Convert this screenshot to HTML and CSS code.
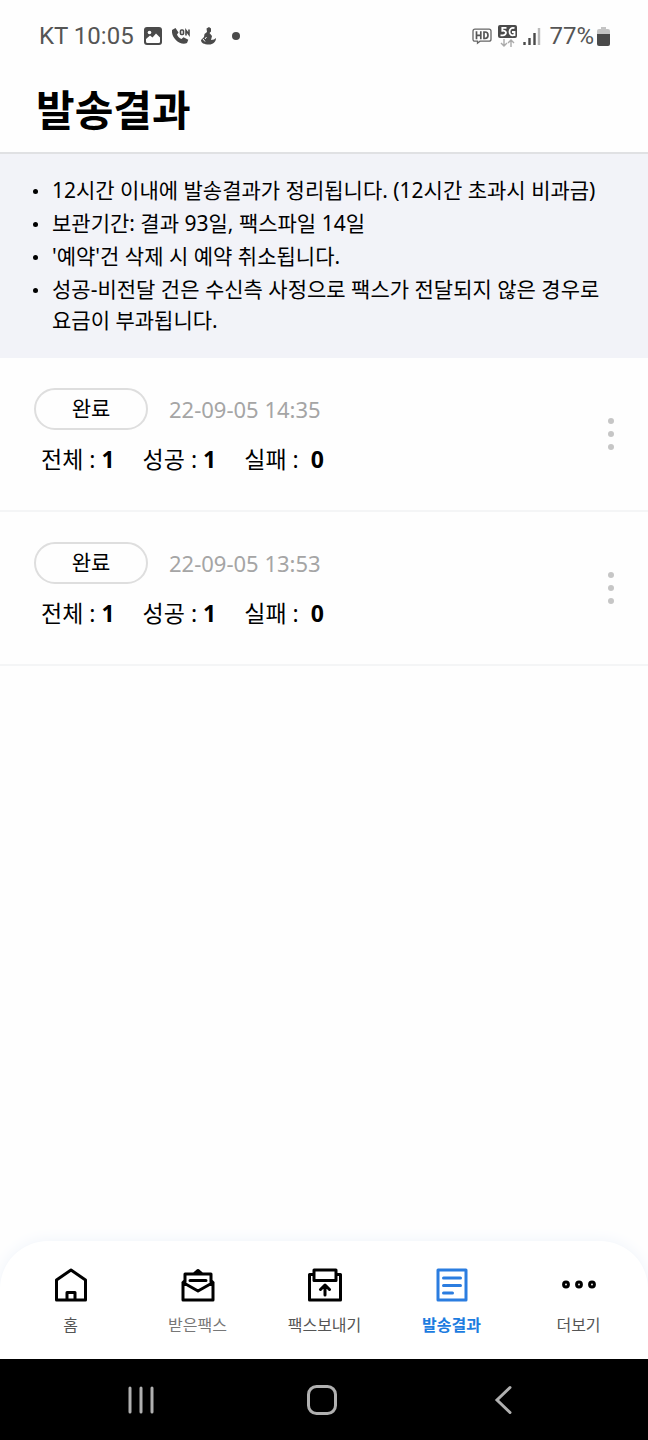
FILE: index.html
```html
<!DOCTYPE html>
<html lang="ko">
<head>
  <meta charset="UTF-8" />
  <meta name="viewport" content="width=device-width, initial-scale=1.0"/>
  <title>발송결과</title>
  <link rel="stylesheet" href="styles.css">
</head>
<body>
  <div class="status-bar">
    <div class="status-left">
      <span class="clock">KT 10:05</span>
      <svg width="18" height="18" viewBox="0 0 18 18">
        <rect width="18" height="18" rx="3" fill="#4a4a4a"/>
        <circle cx="5.5" cy="5.5" r="1.8" fill="#fff"/>
        <path d="M2 14.5V12l4-3.5 2.5 2 3.5-4 4 4v4.500Q16 16 14.500 16H3.500Q2 16 2 14.500z" fill="#fff"/>
      </svg>
      <svg width="18" height="18" viewBox="0 0 18 18">
        <path d="M0 3l3.500-2 3 4.500-1.500 2c.8 2 2.300 3.700 4.500 4.500l2-1.800 4.800 2.500-1.300 3.300C8 19-1 11 0 3z" fill="#4a4a4a"/>
        <rect x="8.500" y="3" width="3" height="4.500" rx="1" fill="none" stroke="#4a4a4a" stroke-width="1.600"/>
        <path d="M14 8.500V3.500l3 4V2.500" fill="none" stroke="#4a4a4a" stroke-width="1.600"/>
      </svg>
      <svg width="16" height="18" viewBox="0 0 16 18">
        <path d="M6.500 1.500L9 0l2 1.500v3L9.500 6l2.500 3-1 4 3-.5 2-1.500c0 4-3 6.500-7 6.500-5 0-8-1.500-8-4.500L4 10l.5-3L7 5z" fill="#4a4a4a"/>
        <path d="M3 12l2 2.500M6.500 10l-1.500 2" stroke="#fff" stroke-width="1" fill="none"/>
      </svg>
      <span class="more-dot"></span>
    </div>
    <div class="status-right">
      <svg width="20" height="18" viewBox="0 0 20 18">
        <path d="M3 2.200h14q2 0 2 2v8q0 2-2 2H8l-2.500 2v-2H3q-2 0-2-2v-8q0-2 2-2z" fill="none" stroke="#666" stroke-width="1.300"/>
        <path d="M4.500 4.300v8M8.800 4.300v8M4.500 8.300h4M12 5v6.500h1c4 0 4-6.500 0-6.500z" fill="none" stroke="#555" stroke-width="1.700"/>
      </svg>
      <svg width="19" height="22" viewBox="0 0 19 22">
        <rect width="19" height="13" rx="2" fill="#4a4a4a"/>
        <path d="M8.500 2.800H4.300v3c5-.8 4.700 4.700.2 4.500H2.500M16.500 3.200c-6.500-2-6.500 8.500-1 7h1V7H14" fill="none" stroke="#fff" stroke-width="1.800"/>
        <path d="M6 14v7M3 18l3 3 3-3M13 22v-7M10 18l3-3 3 3" fill="none" stroke="#aaa" stroke-width="1.400"/>
      </svg>
      <svg width="18" height="18" viewBox="0 0 18 18">
        <path d="M1.500 15v3M6.500 11v7M11.500 6v12" stroke="#4a4a4a" stroke-width="2.400"/>
        <path d="M16 1v17" stroke="#bbb" stroke-width="2.400"/>
      </svg>
      <span class="battery-text">77%</span>
      <svg class="battery" width="13" height="19" viewBox="0 0 13 19">
        <path d="M4 0h5v2h2q2 0 2 2v4H0V4q0-2 2-2h2z" fill="#c4c4c4"/>
        <path d="M0 7h13v10q0 2-2 2H2q-2 0-2-2z" fill="#4a4a4a"/>
      </svg>
    </div>
  </div>

  <header class="header">
    <h1>발송결과</h1>
  </header>

  <ul class="notice">
    <li>12시간 이내에 발송결과가 정리됩니다. (12시간 초과시 비과금)</li>
    <li>보관기간: 결과 93일, 팩스파일 14일</li>
    <li>'예약'건 삭제 시 예약 취소됩니다.</li>
    <li>성공-비전달 건은 수신측 사정으로 팩스가 전달되지 않은 경우로 요금이 부과됩니다.</li>
  </ul>

  <main class="result-list">
    <article class="result">
      <div class="result-info">
        <div class="result-top">
          <span class="state">완료</span>
          <time>22-09-05 14:35</time>
        </div>
        <div class="counts">
          <span>전체 : <b>1</b></span>
          <span>성공 : <b>1</b></span>
          <span>실패 : <b class="fail">0</b></span>
        </div>
      </div>
      <button class="menu-btn" aria-label="메뉴"><i></i><i></i><i></i></button>
    </article>
    <article class="result">
      <div class="result-info">
        <div class="result-top">
          <span class="state">완료</span>
          <time>22-09-05 13:53</time>
        </div>
        <div class="counts">
          <span>전체 : <b>1</b></span>
          <span>성공 : <b>1</b></span>
          <span>실패 : <b class="fail">0</b></span>
        </div>
      </div>
      <button class="menu-btn" aria-label="메뉴"><i></i><i></i><i></i></button>
    </article>
  </main>

  <nav class="tab-bar">
    <a href="#" class="tab">
      <svg width="36" height="36" viewBox="0 0 36 36">
        <path d="M3.500 13L18 3l14.500 10v20h-29zM14 33v-7.500h8V33" />
      </svg>
      <span>홈</span>
    </a>
    <a href="#" class="tab light">
      <svg width="36" height="36" viewBox="0 0 36 36">
        <path d="M5 15V7h26v8M3 15.500V33h30V15.500M3 15.500l2-2M33 15.500l-2-2M3 15.500l15 8.500 15-8.500M14.500 6.500L18 3.500l3.500 3M10 13.500h16" />
      </svg>
      <span>받은팩스</span>
    </a>
    <a href="#" class="tab">
      <svg width="36" height="36" viewBox="0 0 36 36">
        <path d="M7 7.500H2.500V33h31V7.500H29M7 3h22v10.500H7zM18 28v-9M13.500 22.500L18 18l4.500 4.500" />
      </svg>
      <span>팩스보내기</span>
    </a>
    <a href="#" class="tab active">
      <svg width="36" height="36" viewBox="0 0 36 36">
        <path d="M4 3h28v30H4zM9.500 11h17M9.500 18.500h17M9.500 26h9" />
      </svg>
      <span>발송결과</span>
    </a>
    <a href="#" class="tab">
      <svg width="36" height="36" viewBox="0 0 36 36">
        <circle cx="5" cy="17.500" r="2.400"/>
        <circle cx="18" cy="17.500" r="2.400"/>
        <circle cx="31" cy="17.500" r="2.400"/>
      </svg>
      <span>더보기</span>
    </a>
  </nav>

  <div class="system-nav">
    <button aria-label="최근 앱">
      <svg width="32" height="32" viewBox="0 0 32 32"><path d="M5 4v24M16 4v24M27 4v24"/></svg>
    </button>
    <button aria-label="홈 화면">
      <svg width="32" height="32" viewBox="0 0 32 32"><rect x="2.500" y="2.500" width="27" height="27" rx="8"/></svg>
    </button>
    <button aria-label="뒤로">
      <svg width="32" height="32" viewBox="0 0 32 32"><path d="M23 3.500L10 16l13 12.500"/></svg>
    </button>
  </div>
</body>
</html>
```

FILE: styles.css
```css
* {
  box-sizing: border-box;
}
body {
  margin: 0;
  min-height: 100vh;
  display: flex;
  flex-direction: column;
  background: #fefefe;
  color: #000;
  font-family: "Noto Sans", "Noto Sans CJK KR", sans-serif;
}
button {
  background: none;
  border: none;
  padding: 0;
  cursor: pointer;
}

/* status bar */
.status-bar {
  height: 72px;
  padding: 0 38px 0 39px;
  display: flex;
  align-items: center;
  justify-content: space-between;
  color: #555;
  font-family: Roboto, sans-serif;
  font-size: 24px;
}
.status-left {
  display: flex;
  align-items: center;
  gap: 10px;
}
.status-right {
  display: flex;
  align-items: center;
  gap: 6px;
}
.battery-text {
  margin: 0 -3px 0 2px;
}
.more-dot {
  width: 8px;
  height: 8px;
  margin-left: 6px;
  border-radius: 50%;
  background: #4a4a4a;
}

/* title */
.header {
  padding: 6px 36px 15px;
  border-bottom: 2px solid #e0e1e3;
}
.header h1 {
  margin: 0;
  font-family: "Noto Sans CJK KR", sans-serif;
  font-size: 42px;
  line-height: 59px;
  font-weight: 700;
}

/* notice */
.notice {
  margin: 0;
  padding: 21px 32px 20px;
  list-style: none;
  background: #f2f3f8;
  font-size: 21px;
  line-height: 31px;
}
.notice li {
  display: flex;
  margin-bottom: 2px;
  word-break: keep-all;
}
.notice li::before {
  content: "";
  flex: none;
  width: 5px;
  height: 5px;
  margin: 14px 14px 0 1px;
  border-radius: 50%;
  background: #000;
}

/* result list */
.result-list {
  flex: 1;
}
.result {
  display: flex;
  align-items: center;
  justify-content: space-between;
  padding: 30px 24px 30px 34px;
  border-bottom: 2px solid #f4f5f6;
}
.result-top {
  display: flex;
  align-items: center;
  gap: 21px;
}
.state {
  width: 114px;
  height: 42px;
  border: 2px solid #dedede;
  border-radius: 21px;
  font-size: 21px;
  line-height: 36px;
  text-align: center;
}
.result time {
  color: #a5a5a5;
  font-size: 22px;
}
.counts {
  display: flex;
  gap: 28px;
  padding: 13px 0 5px 7px;
  font-size: 23px;
  line-height: 32px;
}
.counts .fail {
  margin-left: 6px;
}
.menu-btn {
  width: 26px;
  height: 44px;
  display: flex;
  flex-direction: column;
  align-items: center;
  justify-content: center;
  gap: 7px;
}
.menu-btn i {
  width: 6px;
  height: 6px;
  border-radius: 50%;
  background: #c6c6c6;
}

/* bottom tabs */
.tab-bar {
  display: grid;
  grid-template-columns: repeat(5, 1fr);
  padding: 26px 6px 22px 7px;
  background: #fff;
  border-radius: 48px 48px 0 0;
  box-shadow: 0 0 16px #eff4fb;
}
.tab {
  display: flex;
  flex-direction: column;
  align-items: center;
  gap: 10px;
  color: #555;
  font-size: 16px;
  line-height: 24px;
  text-decoration: none;
}
.tab svg {
  fill: none;
  stroke: #000;
  stroke-width: 3;
  stroke-linejoin: round;
  stroke-linecap: round;
}
.tab.light {
  color: #777;
}
.tab.active {
  color: #1c7ce0;
  font-weight: 700;
}
.tab.active svg {
  stroke: #2b7de0;
}

/* android buttons */
.system-nav {
  height: 81px;
  padding: 0 54px 0 50px;
  display: grid;
  grid-template-columns: repeat(3, 1fr);
  background: #000;
}
.system-nav svg {
  display: block;
  margin: 0 auto;
  fill: none;
  stroke: #b0b0b0;
  stroke-width: 3;
  stroke-linecap: round;
}
```
